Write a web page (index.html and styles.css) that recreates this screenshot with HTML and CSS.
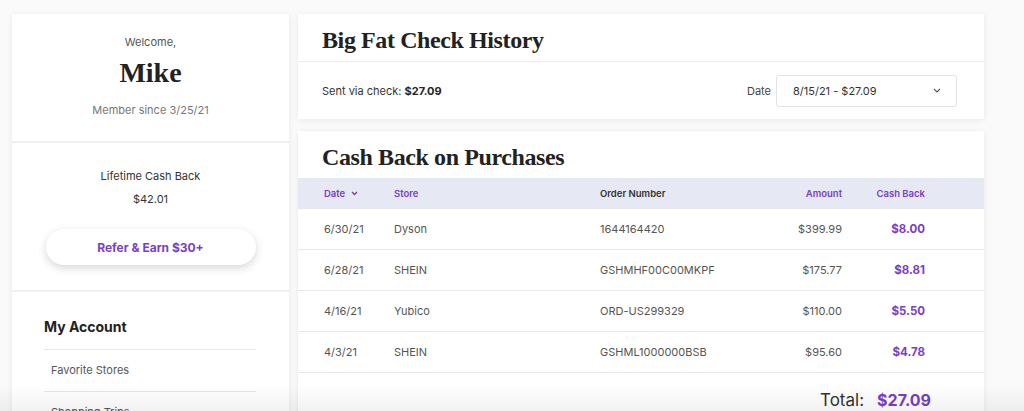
FILE: index.html
```html
<!DOCTYPE html>
<html>
<head>
<meta charset="utf-8">
<link rel="stylesheet" href="styles.css">
</head>
<body>
<div class="page">
  <aside class="side">
    <section class="welcome">
      <div class="small">Welcome,</div>
      <div class="name">Mike</div>
      <div class="member">Member since 3/25/21</div>
    </section>
    <section class="lifetime">
      <div class="lt-label">Lifetime Cash Back</div>
      <div class="lt-value">$42.01</div>
      <button class="refer">Refer &amp; Earn $30+</button>
    </section>
    <section class="account">
      <div class="acc-title">My Account</div>
      <ul class="acc-list">
        <li>Favorite Stores</li>
        <li>Shopping Trips</li>
      </ul>
    </section>
  </aside>
  <main class="main">
    <div class="card">
      <div class="card-head"><h2>Big Fat Check History</h2></div>
      <div class="check-row">
        <div class="sent">Sent via check: <b>$27.09</b></div>
        <div class="date-field">
          <span class="date-label">Date</span>
          <div class="select">
            <span>8/15/21 - $27.09</span>
            <svg class="chev" width="8" height="5" viewBox="0 0 8 5"><path d="M1 1l3 3 3-3" fill="none" stroke="#555" stroke-width="1.1"/></svg>
          </div>
        </div>
      </div>
    </div>
    <div class="card card2">
      <div class="card-head"><h2>Cash Back on Purchases</h2></div>
      <div class="trow thead">
        <div class="purple">Date <svg class="hchev" width="7" height="5" viewBox="0 0 7 5"><path d="M1 1l2.5 2.5L6 1" fill="none" stroke="#7a3ec8" stroke-width="1.4"/></svg></div>
        <div class="purple">Store</div>
        <div class="dark">Order Number</div>
        <div class="purple r">Amount</div>
        <div class="purple r">Cash Back</div>
      </div>
      <div class="trow">
        <div>6/30/21</div><div>Dyson</div><div>1644164420</div><div class="r">$399.99</div><div class="r cb">$8.00</div>
      </div>
      <div class="trow">
        <div>6/28/21</div><div>SHEIN</div><div>GSHMHF00C00MKPF</div><div class="r">$175.77</div><div class="r cb">$8.81</div>
      </div>
      <div class="trow">
        <div>4/16/21</div><div>Yubico</div><div>ORD-US299329</div><div class="r">$110.00</div><div class="r cb">$5.50</div>
      </div>
      <div class="trow">
        <div>4/3/21</div><div>SHEIN</div><div>GSHML1000000BSB</div><div class="r">$95.60</div><div class="r cb">$4.78</div>
      </div>
      <div class="total">
        <span class="t-label">Total:</span>
        <span class="t-value">$27.09</span>
      </div>
    </div>
  </main>
</div>
<div class="fade"></div>
</body>
</html>
```
FILE: styles.css
```css
* { box-sizing: border-box; }
html, body { margin: 0; padding: 0; }
body {
  background: #fafafa;
  font-family: Inter, "Open Sans", sans-serif;
  color: #444;
  width: 1024px;
  height: 411px;
  overflow: hidden;
}
.page {
  display: flex;
  gap: 9px;
  padding: 14px 0 0 12px;
}
.side {
  width: 277px;
  background: #fff;
  box-shadow: 0 1px 6px rgba(0,0,0,0.08);
  height: 420px;
}
.side section { border-bottom: 2px solid #efefef; }
.welcome {
  padding: 20px 0 23px;
  text-align: center;
}
.small, .member, .lt-label, .lt-value {
  font-size: 11px;
  line-height: 16px;
}
.small { color: #555; }
.name {
  font-family: "Liberation Serif", serif;
  font-weight: 700;
  font-size: 28px;
  line-height: 32px;
  color: #222;
  margin-top: 7px;
}
.member { color: #777; margin-top: 13px; }
.lifetime {
  padding: 25px 0 25px;
  text-align: center;
}
.lt-label { color: #333; }
.lt-value { color: #333; margin-top: 7px; }
.refer {
  display: block;
  margin: 22px auto 0;
  width: 210px;
  height: 36px;
  border: none;
  border-radius: 18px;
  background: #fff;
  box-shadow: 0 3px 8px rgba(0,0,0,0.16);
  color: #7a3ec8;
  font-family: Inter, sans-serif;
  font-weight: 700;
  font-size: 12px;
}
.account { padding: 25px 33px 0 32px; border-bottom: none !important; }
.acc-title {
  font-size: 14px;
  font-weight: 700;
  color: #222;
  line-height: 20px;
}
.acc-list {
  list-style: none;
  margin: 12px 0 0;
  padding: 0;
  border-top: 1px solid #e6e6e6;
}
.acc-list li {
  height: 42px;
  line-height: 41px;
  font-size: 11px;
  color: #555;
  padding-left: 7px;
  border-bottom: 1px solid #e6e6e6;
}
.main {
  width: 686px;
  display: flex;
  flex-direction: column;
  gap: 12px;
}
.card {
  background: #fff;
  box-shadow: 0 1px 6px rgba(0,0,0,0.08);
}
.card-head {
  padding: 12px 24px 7px;
  border-bottom: 1px solid #ececec;
}
.card-head h2 {
  margin: 0;
  font-family: "Liberation Serif", serif;
  font-weight: 700;
  font-size: 24px;
  line-height: 28px;
  color: #222;
  letter-spacing: -0.4px;
}
.check-row {
  height: 57px;
  display: flex;
  align-items: center;
  justify-content: space-between;
  padding: 0 27px 0 24px;
}
.sent { font-size: 11px; color: #333; }
.sent b { color: #222; }
.date-field { display: flex; align-items: center; gap: 5px; }
.date-label { font-size: 11px; color: #444; }
.select {
  width: 181px;
  height: 32px;
  border: 1px solid #e3e3e3;
  border-radius: 3px;
  display: flex;
  align-items: center;
  justify-content: space-between;
  padding: 0 15px 0 16px;
  font-size: 11px;
  color: #333;
}
.card2 { height: 300px; }
.card2 .card-head { border-bottom: none; padding-top: 12px; padding-bottom: 7px; }
.trow {
  display: grid;
  grid-template-columns: 70px 206px 1fr 90px 83px;
  padding: 0 59px 0 26px;
  height: 41px;
  align-items: center;
  border-bottom: 1px solid #e8e8e8;
  font-size: 11px;
  color: #555;
}
.thead {
  background: #e6e9f4;
  height: 31px;
  border-bottom: none;
  font-size: 9.5px;
  font-weight: 600;
}
.purple { color: #7a3ec8; }
.dark { color: #333; }
.hchev { margin-left: 3px; vertical-align: 1px; }
.r { text-align: right; }
.cb { color: #7a3ec8; font-weight: 700; font-size: 11.5px; }
.total {
  display: flex;
  justify-content: flex-end;
  align-items: center;
  gap: 13px;
  padding: 0 53px 0 0;
  height: 54px;
}
.t-label { font-size: 17px; color: #333; }
.t-value { font-size: 16px; color: #7a3ec8; font-weight: 700; }
.fade {
  position: fixed;
  left: 0; right: 0; bottom: 0;
  height: 26px;
  background: linear-gradient(to bottom, rgba(0,0,0,0), rgba(0,0,0,0.05));
  pointer-events: none;
}
```
